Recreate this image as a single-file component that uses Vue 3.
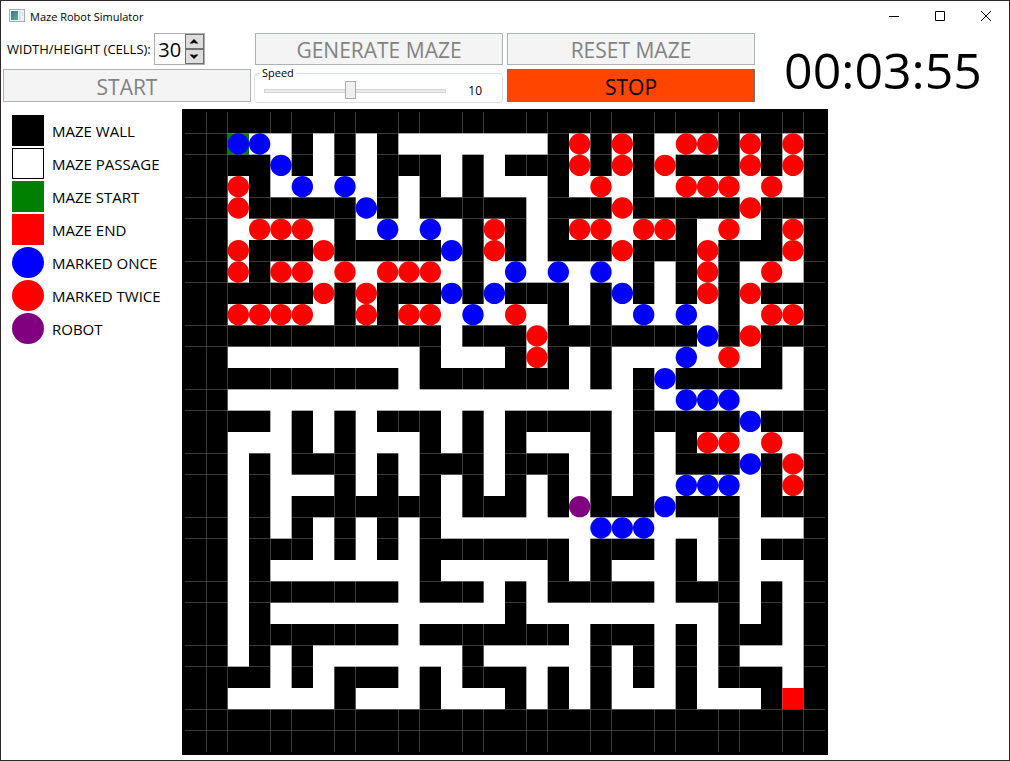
<script setup>
import { ref, computed } from 'vue'

const size = ref('30')
const speed = ref(10)

const FIELD = 640
const MARGIN = 3

// '#': wall, '.': passage, 'B': marked once, 'R': marked twice,
// 'S': start (marked once), 'E': end, 'P': robot
const plan = [
  '##############################',
  '##SB.#.#.#.......#R#R#.RR#R#R#',
  '####B#.#.###.#.###R#R#R###R#R#',
  '##R#.B.B.#.#.#...#.R.#.RRR.R.#',
  '##R#####B#.#####.###R#####R###',
  '##.RRR.#.B.B.#R#.#RR.RR#.R.#R#',
  '##R###R#####B#R#.###R###R###R#',
  '##R#RR.R.RRR.#.B.B.B.#.#R#.R.#',
  '######R#R###B#B###.#B#.#R#R###',
  '##RRRR.#R#RR.B.R.#.#.B.B.#.RR#',
  '############.###R#######B#R###',
  '##.........#...#R#.#...B.R.#.#',
  '##########.#######.#.#B#####.#',
  '##...................#.BBB...#',
  '####.#.#.###.#.#####.#####B###',
  '##...#.#...#.#.#...#.#.#RR.R.#',
  '##.#.###.#.###.###.#.#.###B#R#',
  '##.#...#.#.#.#.#.#.#.#.BBB.#R#',
  '##.#.#######.###.#P###B###.###',
  '##.#.#.#.#.#.......BBB...#...#',
  '##.###.#.#.#######.###.#.#.###',
  '##.#.......#.....#.#...#.#...#',
  '##.#######.###.#.#####.###.#.#',
  '##.#...........#.........#.#.#',
  '##.#######.#######.###.#.###.#',
  '##.#.#.......#.....#.#.#.#...#',
  '####.#.###.#.###.#.#.#.#.###.#',
  '##.....#...#...#.#.#...#...#E#',
  '##############################',
  '##############################'
]

const cell = FIELD / plan.length
const tileFill = { '#': '#000000', S: '#008000', E: '#ff0000' }
const markFill = { S: '#0000ff', B: '#0000ff', R: '#ff0000', P: '#800080' }

const cells = computed(() =>
  plan.flatMap((line, row) =>
    [...line].map((kind, col) => ({
      id: row * plan.length + col,
      x: MARGIN + col * cell,
      y: MARGIN + row * cell,
      tile: tileFill[kind],
      mark: markFill[kind]
    }))
  )
)
const tiles = computed(() => cells.value.filter((c) => c.tile))
const marks = computed(() => cells.value.filter((c) => c.mark))

const legend = [
  { label: 'MAZE WALL', look: 'wall' },
  { label: 'MAZE PASSAGE', look: 'passage' },
  { label: 'MAZE START', look: 'start' },
  { label: 'MAZE END', look: 'end' },
  { label: 'MARKED ONCE', look: 'once round' },
  { label: 'MARKED TWICE', look: 'twice round' },
  { label: 'ROBOT', look: 'robot round' }
]

function step(delta) {
  size.value = String(Number(size.value) + delta)
}
</script>

<template>
  <div class="window">
    <header class="titlebar">
      <svg class="app-icon" width="16" height="14" viewBox="0 0 16 14" aria-hidden="true">
        <defs>
          <linearGradient id="pane" x1="0" y1="0" x2="1" y2="1">
            <stop offset="0" stop-color="#3f6fa0" />
            <stop offset="1" stop-color="#5fae7c" />
          </linearGradient>
        </defs>
        <rect x="0.5" y="0.5" width="15" height="12" fill="#f2f3f5" stroke="#a9adb3" />
        <rect x="2" y="2" width="7" height="9" fill="url(#pane)" />
        <rect x="10" y="2" width="2" height="9" fill="#dfe3e8" />
        <rect x="13" y="3" width="1" height="4" fill="#cfd4da" />
      </svg>
      <span class="title">Maze Robot Simulator</span>
      <button class="caption" type="button" aria-label="Minimize">
        <svg width="10" height="10" viewBox="0 0 10 10"><rect y="5" width="10" height="1" /></svg>
      </button>
      <button class="caption" type="button" aria-label="Maximize">
        <svg width="10" height="10" viewBox="0 0 10 10"><path d="M.5 .5h9v9h-9z" fill="none" stroke="#000" /></svg>
      </button>
      <button class="caption" type="button" aria-label="Close">
        <svg width="10" height="10" viewBox="0 0 10 10"><path d="M0 0L10 10M10 0L0 10" fill="none" stroke="#000" /></svg>
      </button>
    </header>

    <section class="controls">
      <div class="size">
        <label for="size">WIDTH/HEIGHT (CELLS):</label>
        <div class="spinner">
          <input id="size" v-model="size" type="text" inputmode="numeric" />
          <div class="steps">
            <button type="button" aria-label="Increase" @click="step(1)">
              <svg width="10" height="5" viewBox="0 0 10 5"><path d="M5 0L9.500 4.500H6.500L5 3.500L3.500 4.500H.5z" /></svg>
            </button>
            <button type="button" aria-label="Decrease" @click="step(-1)">
              <svg width="10" height="5" viewBox="0 0 10 5"><path d="M5 5L9.500 .5H6.500L5 1.500L3.500 .5H.5z" /></svg>
            </button>
          </div>
        </div>
      </div>
      <button class="action" type="button" disabled>GENERATE MAZE</button>
      <button class="action" type="button" disabled>RESET MAZE</button>
      <output class="timer">00:03:55</output>
      <button class="action" type="button" disabled>START</button>
      <fieldset class="speed">
        <legend><label for="speed">Speed</label></legend>
        <input id="speed" v-model.number="speed" type="range" min="1" max="20" />
        <output for="speed">{{ speed }}</output>
      </fieldset>
      <button class="action stop" type="button">STOP</button>
    </section>

    <main class="board">
      <ul class="legend">
        <li v-for="item in legend" :key="item.label">
          <span class="swatch" :class="item.look"></span>{{ item.label }}
        </li>
      </ul>
      <svg class="maze" viewBox="0 0 646 646" role="img" aria-label="Maze">
        <rect width="646" height="646" fill="#000" />
        <rect x="3" y="3" width="640" height="640" fill="#fff" />
        <rect v-for="c in tiles" :key="c.id" :x="c.x" :y="c.y" :width="cell" :height="cell" :fill="c.tile" />
        <circle v-for="c in marks" :key="c.id" :cx="c.x + cell / 2" :cy="c.y + cell / 2" :r="cell / 2" :fill="c.mark" />
      </svg>
    </main>
  </div>
</template>

<style>
body {
  margin: 0;
  background: #fff;
}
</style>

<style scoped>
.window {
  box-sizing: border-box;
  min-height: 100vh;
  display: flex;
  flex-direction: column;
  border: 1px solid #2f2728;
  background: #fff;
  color: #000;
  font-family: "Open Sans", "Noto Sans", sans-serif;
  font-size: 12px;
}

button,
input {
  font-family: inherit;
  margin: 0;
  padding: 0;
}

.titlebar {
  display: flex;
  align-items: center;
  height: 30px;
}

.app-icon {
  margin: 0 5px 0 8px;
}

.title {
  flex: 1;
  font-size: 11px;
}

.caption {
  display: flex;
  align-items: center;
  justify-content: center;
  width: 46px;
  height: 30px;
  border: 0;
  background: none;
}

.controls {
  display: grid;
  grid-template-columns: repeat(4, 1fr);
  grid-template-rows: 36px 37px;
}

.action {
  margin: 2px;
  padding-top: 2px;
  border: 1px solid #adb2b5;
  background: #f4f4f4;
  color: #838383;
  font-size: 21px;
  line-height: 28px;
}

.action.stop {
  border-color: #707070;
  background: #ff4500;
  color: #000;
}

.size {
  display: flex;
  align-items: center;
  gap: 3px;
  padding-left: 6px;
  font-size: 13px;
  white-space: nowrap;
}

.spinner {
  display: flex;
  box-sizing: border-box;
  width: 51px;
  height: 32px;
  border: 1px solid #abadb3;
}

.spinner input {
  flex: 1;
  min-width: 0;
  border: 0;
  outline: 0;
  background: #fff;
  color: #000;
  font-size: 20px;
  text-align: center;
}

.steps {
  display: flex;
  flex-direction: column;
  width: 19px;
}

.steps button {
  flex: 1;
  display: flex;
  align-items: center;
  justify-content: center;
  border: 1px solid #707070;
  background: #dddddd;
}

.timer {
  grid-column: 4;
  grid-row: 1 / 3;
  display: flex;
  align-items: center;
  justify-content: center;
  padding-top: 4px;
  font-size: 50px;
  line-height: 68px;
}

.speed {
  display: flex;
  align-items: center;
  min-width: 0;
  margin: 0 2px 1px 1px;
  padding: 0 20px 0 9px;
  border: 1px solid #d5dfe5;
  border-radius: 4px;
}

.speed legend {
  margin-left: -4px;
  padding: 0 2px;
  font-size: 11px;
  line-height: 12px;
}

.speed input {
  -webkit-appearance: none;
  appearance: none;
  flex: 1;
  min-width: 0;
  height: 18px;
  margin-right: 22px;
  background: none;
}

.speed input::-webkit-slider-runnable-track {
  box-sizing: border-box;
  height: 4px;
  border: 1px solid #d6d6d6;
  background: #e7eaea;
}

.speed input::-webkit-slider-thumb {
  -webkit-appearance: none;
  box-sizing: border-box;
  width: 11px;
  height: 18px;
  margin-top: -9px;
  border: 1px solid #acacac;
  background: #f0f0f0;
}

.board {
  flex: 1;
  display: grid;
  grid-template-columns: 1fr auto 1fr;
  padding: 5px 0;
}

.legend {
  display: flex;
  flex-direction: column;
  gap: 2px;
  margin: 0;
  padding: 6px 0 0 11px;
  list-style: none;
  font-size: 15px;
  white-space: nowrap;
}

.legend li {
  display: flex;
  align-items: center;
  gap: 8px;
  height: 31px;
}

.swatch {
  box-sizing: border-box;
  width: 32px;
  height: 31px;
}

.round {
  border-radius: 50%;
}

.wall {
  background: #000;
}

.passage {
  border: 1px solid #000;
  background: #fff;
}

.start {
  background: #008000;
}

.end,
.twice {
  background: #ff0000;
}

.once {
  background: #0000ff;
}

.robot {
  background: #800080;
}

.maze {
  display: block;
  height: calc(100vh - 115px);
  aspect-ratio: 1;
}
</style>
